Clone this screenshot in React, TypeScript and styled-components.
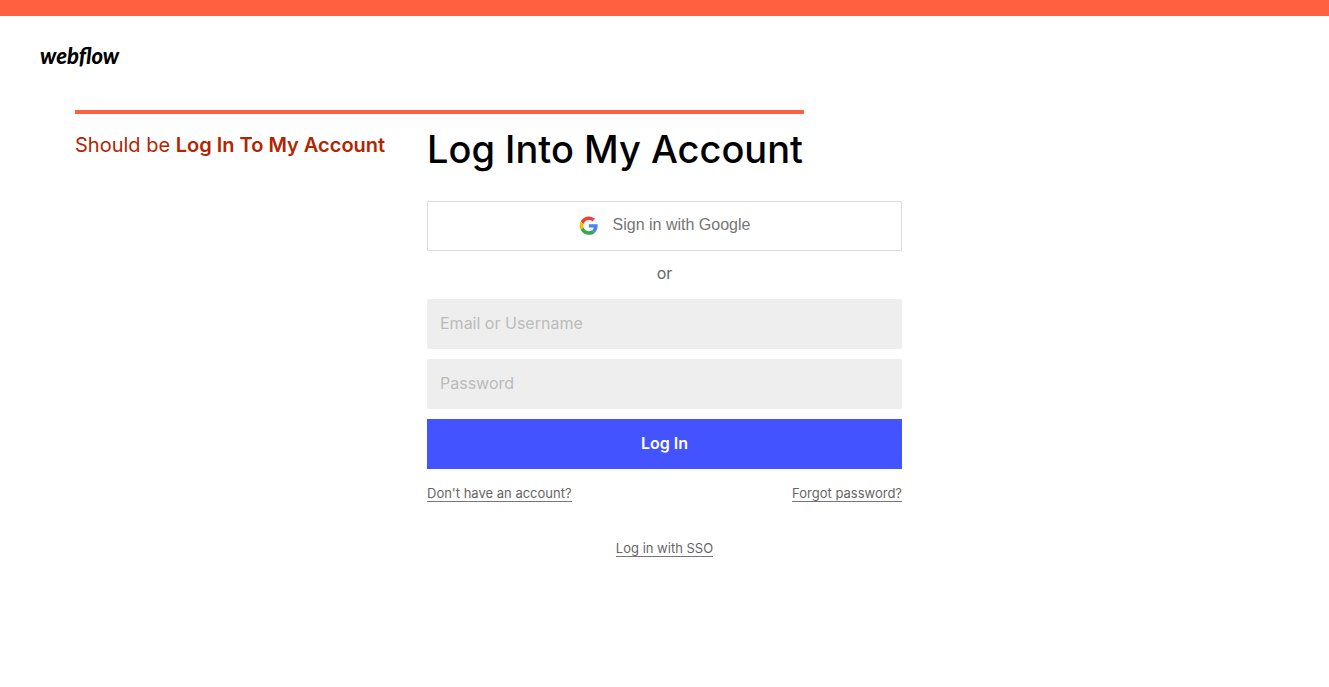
import React from "react";
import styled, { createGlobalStyle } from "styled-components";

const GlobalStyle = createGlobalStyle`
  *, *::before, *::after { box-sizing: border-box; }
  body {
    margin: 0;
    background: #fff;
    color: #000;
    font-family: Inter, "Liberation Sans", sans-serif;
  }
`;

const TopBar = styled.div`
  height: 16px;
  background: #ff6040;
`;

const Header = styled.header`
  padding: 28px 40px 0;
`;

const Logo = styled.a`
  display: inline-block;
  color: #000;
  font: italic 900 22px/24px Lato, sans-serif;
  text-decoration: none;
`;

const Layout = styled.main`
  display: grid;
  grid-template-columns: 1fr minmax(0, 475px) 1fr;
  padding-top: 42px;
`;

const Rule = styled.div`
  grid-column: 1 / 3;
  height: 4px;
  margin: 0 98px 0 75px;
  background: #ff6040;
`;

const Note = styled.p`
  grid-column: 1;
  margin: 19px 0 0 75px;
  color: #b32400;
  font-size: 20px;
  font-weight: 400;
  line-height: 24px;
  white-space: nowrap;

  strong { font-weight: 600; }
`;

const Form = styled.form`
  grid-column: 2;
  display: flex;
  flex-direction: column;
  gap: 10px;
`;

const Title = styled.h1`
  margin: 11px 0 18px;
  font-size: 38px;
  font-weight: 500;
  line-height: 48px;
  white-space: nowrap;
`;

const Button = styled.button<{ $primary?: boolean }>`
  display: flex;
  align-items: center;
  justify-content: center;
  gap: 14px;
  height: 50px;
  padding: 0 0 2px;
  border: ${(p) => (p.$primary ? "0" : "1px solid #ddd")};
  background: ${(p) => (p.$primary ? "#4353ff" : "#fff")};
  color: ${(p) => (p.$primary ? "#fff" : "#757575")};
  font: ${(p) =>
    p.$primary
      ? '600 16px/20px Inter, sans-serif'
      : '400 16px/20px "Liberation Sans", sans-serif'};
  cursor: pointer;
`;

const Divider = styled.p`
  margin: 0;
  padding: 2px 0 6px;
  color: #666;
  font-size: 16px;
  line-height: 20px;
  text-align: center;
`;

const Field = styled.input`
  width: 100%;
  height: 50px;
  padding: 0 13px 2px;
  border: 0;
  border-radius: 2px;
  background: #eee;
  color: #333;
  font: 400 16px/20px Inter, sans-serif;

  &::placeholder { color: #bbb; opacity: 1; }
`;

const Links = styled.nav<{ $center?: boolean }>`
  display: flex;
  justify-content: ${(p) => (p.$center ? "center" : "space-between")};
  padding-top: ${(p) => (p.$center ? "28px" : "6px")};
`;

const TextLink = styled.a`
  border-bottom: 1px solid #777;
  color: #666;
  font-size: 13px;
  line-height: 16px;
  text-decoration: none;
`;

const GoogleIcon = () => (
  <svg width="20" height="20" viewBox="0 0 48 48" aria-hidden="true">
    <g transform="translate(1.5 3.5) scale(.92)">
      <path fill="#EA4335" d="M24 9.5c3.54 0 6.71 1.22 9.21 3.6l6.85-6.85C35.9 2.38 30.47 0 24 0 14.62 0 6.51 5.38 2.56 13.22l7.98 6.19C12.43 13.72 17.74 9.5 24 9.5z" />
      <path fill="#4285F4" d="M46.98 24.55c0-1.57-.15-3.09-.38-4.55H24v9.02h12.94c-.58 2.96-2.26 5.48-4.78 7.18l7.73 6c4.51-4.18 7.09-10.36 7.09-17.65z" />
      <path fill="#FBBC05" d="M10.53 28.59c-.48-1.45-.76-2.99-.76-4.59s.27-3.14.76-4.59l-7.98-6.19C.92 16.46 0 20.12 0 24c0 3.88.92 7.54 2.56 10.78l7.97-6.19z" />
      <path fill="#34A853" d="M24 48c6.48 0 11.93-2.13 15.89-5.81l-7.73-6c-2.15 1.45-4.92 2.3-8.16 2.3-6.26 0-11.57-4.22-13.47-9.91l-7.98 6.19C6.51 42.62 14.62 48 24 48z" />
    </g>
  </svg>
);

export default function App() {
  return (
    <>
      <GlobalStyle />
      <TopBar />
      <Header>
        <Logo href="#">webflow</Logo>
      </Header>
      <Layout>
        <Rule />
        <Note>
          Should be <strong>Log In To My Account</strong>
        </Note>
        <Form onSubmit={(e) => e.preventDefault()}>
          <Title>Log Into My Account</Title>
          <Button type="button">
            <GoogleIcon />
            Sign in with Google
          </Button>
          <Divider>or</Divider>
          <Field type="text" placeholder="Email or Username" aria-label="Email or Username" />
          <Field type="password" placeholder="Password" aria-label="Password" />
          <Button type="submit" $primary>
            Log In
          </Button>
          <Links>
            <TextLink href="#">Don't have an account?</TextLink>
            <TextLink href="#">Forgot password?</TextLink>
          </Links>
          <Links $center>
            <TextLink href="#">Log in with SSO</TextLink>
          </Links>
        </Form>
      </Layout>
    </>
  );
}
